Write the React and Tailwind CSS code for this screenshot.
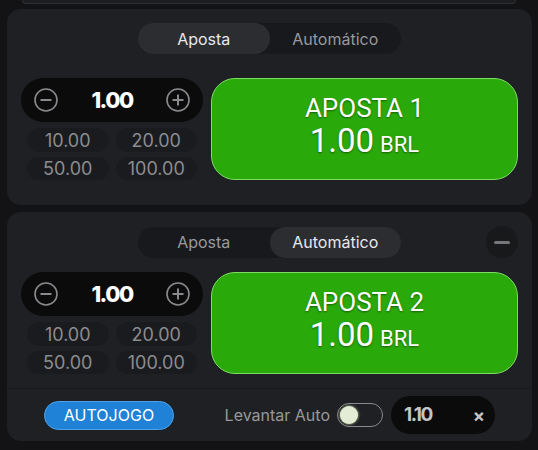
import React from "react";

function CircleIcon({ plus }) {
  return (
    <svg width="24" height="24" viewBox="0 0 24 24" fill="none" stroke="#8a8a8e" strokeWidth="1.6">
      <circle cx="12" cy="12" r="11" />
      <line x1="6.5" y1="12" x2="17.5" y2="12" strokeWidth="2" />
      {plus && <line x1="12" y1="6.5" x2="12" y2="17.5" strokeWidth="2" />}
    </svg>
  );
}

function Tabs({ active }) {
  const on = "bg-[#2c2d31] text-[#e8e8ea]";
  const off = "text-[#98989c]";
  return (
    <div className="flex w-[263px] h-[31px] rounded-full bg-[#18191c]">
      <div className={"flex-1 rounded-full flex items-center justify-center " + (active === 0 ? on : off)}>Aposta</div>
      <div className={"flex-1 rounded-full flex items-center justify-center " + (active === 1 ? on : off)}>Automático</div>
    </div>
  );
}

function BetRow({ n }) {
  return (
    <div className="flex gap-[8px]">
      <div className="w-[182px] flex flex-col">
        <div className="h-[44px] rounded-full bg-[#0b0b0c] flex items-center justify-between px-[13px]">
          <CircleIcon />
          <span className="text-white font-extrabold text-[22px] tracking-[-1.5px]">1.00</span>
          <CircleIcon plus />
        </div>
        <div className="grid grid-cols-2 gap-x-[7px] gap-y-[5px] px-[6px] mt-[6px] text-[18px] text-[#8c8c90]">
          <div className="h-[24px] rounded-full bg-[#1a1b1e] flex items-center justify-center">10.00</div>
          <div className="h-[24px] rounded-full bg-[#1a1b1e] flex items-center justify-center">20.00</div>
          <div className="h-[23px] rounded-full bg-[#1a1b1e] flex items-center justify-center">50.00</div>
          <div className="h-[23px] rounded-full bg-[#1a1b1e] flex items-center justify-center">100.00</div>
        </div>
      </div>
      <div
        className="flex-1 h-[102px] rounded-[24px] bg-[#2aa90a] border-[1.5px] border-[#7cdc64] flex flex-col items-center justify-center text-white [text-shadow:0_1px_2px_rgba(0,0,0,0.45)]"
        style={{ fontFamily: "Roboto, sans-serif" }}
      >
        <div className="text-[26px] leading-[30px]">APOSTA {n}</div>
        <div className="leading-[36px]">
          <span className="text-[33px]">1.00</span>
          <span className="text-[22px] ml-[6px]">BRL</span>
        </div>
      </div>
    </div>
  );
}

export default function App() {
  return (
    <div className="w-[538px] h-[450px] bg-[#131315] overflow-hidden text-[16px]" style={{ fontFamily: "Inter, sans-serif" }}>
      <div className="mx-[22px] h-[4px] rounded-b-[14px] bg-[#1c1d20] border-b border-x border-[#2e2f33]"></div>
      <div className="mx-[7px] w-[525px] mt-[5px] h-[196px] rounded-[14px] bg-[#1f2023] px-[14px] pt-[14px]">
        <div className="flex justify-center">
          <Tabs active={0} />
        </div>
        <div className="mt-[24px]">
          <BetRow n={1} />
        </div>
      </div>
      <div className="mx-[7px] w-[525px] mt-[7px] h-[229px] rounded-[14px] bg-[#1f2023] flex flex-col">
        <div className="px-[14px] pt-[14px]">
          <div className="flex items-center">
            <div className="flex-1"></div>
            <Tabs active={1} />
            <div className="flex-1 flex justify-end">
              <div className="w-[32px] h-[32px] rounded-full bg-[#18191b] flex items-center justify-center">
                <div className="w-[16px] h-[3px] rounded-full bg-[#77777b]"></div>
              </div>
            </div>
          </div>
          <div className="mt-[14px]">
            <BetRow n={2} />
          </div>
        </div>
        <div className="mt-[14px] border-t border-[#18191b] flex-1 flex items-center justify-between pl-[37px] pr-[37px]">
          <div className="w-[130px] h-[29px] rounded-full bg-[#1f82d6] border border-[#4ea4ea] flex items-center justify-center text-white text-[16px]">
            AUTOJOGO
          </div>
          <div className="flex items-center">
            <span className="text-[#98989c] text-[16px]">Levantar Auto</span>
            <div className="ml-[7px] w-[46px] h-[24px] rounded-full border-[1.5px] border-[#8a8a8e] flex items-center px-[2px]">
              <div className="w-[18px] h-[18px] rounded-full bg-[#e4ecd6] shadow-[0_0_3px_#cde6b0]"></div>
            </div>
            <div className="ml-[8px] w-[104px] h-[38px] rounded-full bg-[#0b0b0c] flex items-center justify-between pl-[13px] pr-[10px]">
              <span className="text-[#c4c4c6] font-bold text-[19px] tracking-[-1.5px]">1.10</span>
              <span className="text-[#c4c4c6] font-bold text-[18px]">×</span>
            </div>
          </div>
        </div>
      </div>
    </div>
  );
}
